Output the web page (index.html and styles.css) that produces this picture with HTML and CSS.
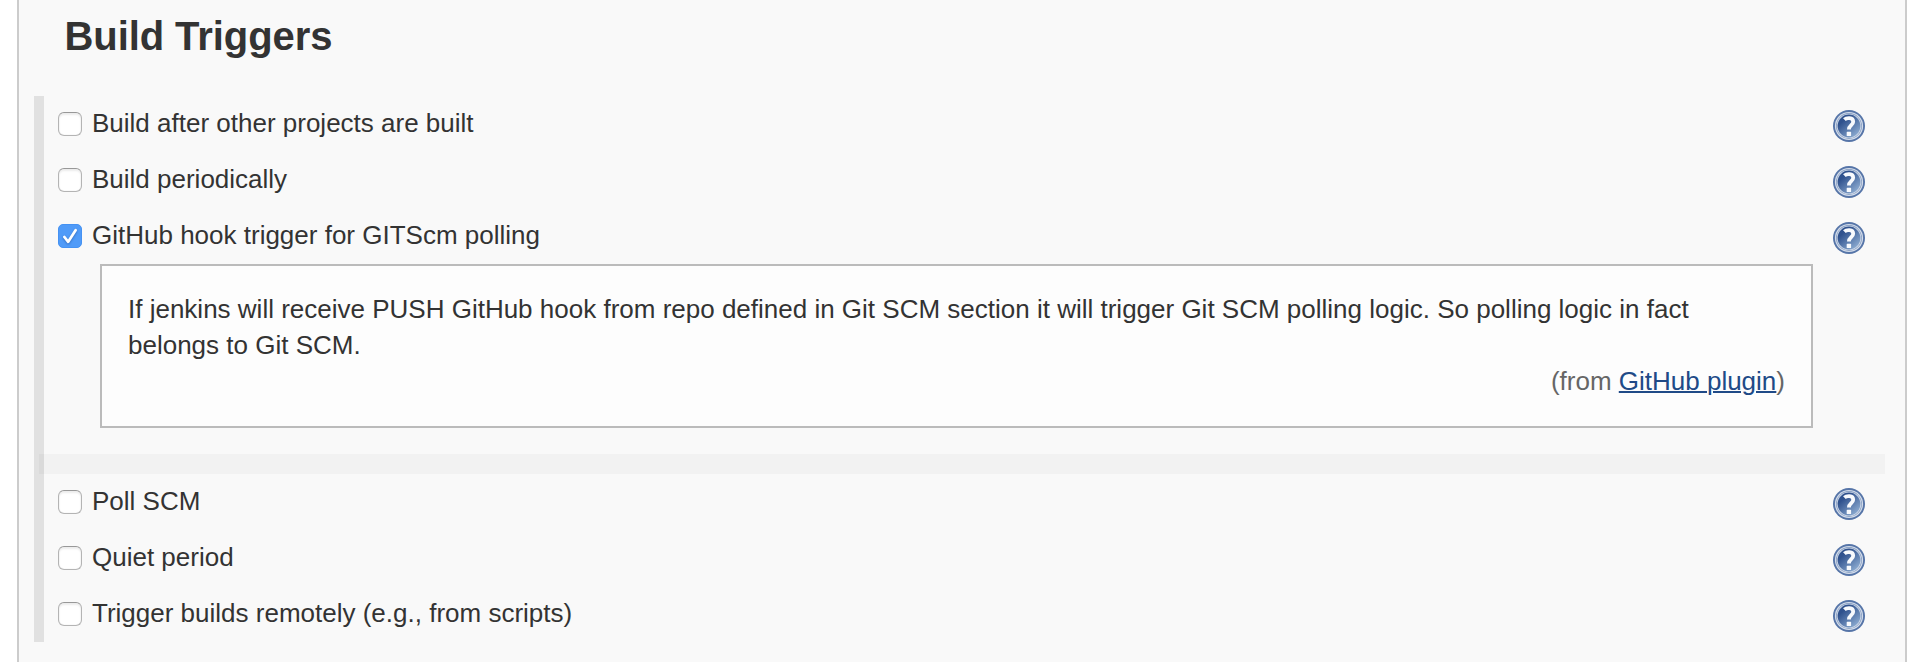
FILE: index.html
```
<!DOCTYPE html>
<html lang="en">
<head>
<meta charset="utf-8">
<title>Build Triggers</title>
<link rel="stylesheet" href="styles.css">
</head>
<body>
<svg class="defs" aria-hidden="true">
  <defs>
    <linearGradient id="disc" x1="0" y1="0.1" x2="0.8" y2="1">
      <stop offset="0.25" stop-color="#30528e"/>
      <stop offset="1" stop-color="#8faed3"/>
    </linearGradient>
    <symbol id="help" viewBox="0 0 32 32">
      <circle cx="16" cy="16" r="16" fill="#5675a8"/>
      <circle cx="16" cy="16" r="14.1" fill="#d3dcea"/>
      <circle cx="16" cy="16" r="12.9" fill="#7e97be"/>
      <circle cx="16" cy="16" r="12.3" fill="#cbd6e7"/>
      <circle cx="16" cy="16" r="11.4" fill="url(#disc)"/>
      <path d="M11.4 9.7C13.4 7.7 20.2 7 20.2 11.8C20.2 15.3 15.9 15.2 15.9 19.6" fill="none" stroke="#f8fafd" stroke-width="3.8"/>
      <rect x="13.7" y="21.8" width="4.4" height="4.2" rx="0.6" fill="#f8fafd"/>
    </symbol>
  </defs>
</svg>
<main class="panel">
  <h1 class="title">Build Triggers</h1>
  <div class="triggers">
    <div class="row">
      <label class="option"><input class="check" type="checkbox"><span>Build after other projects are built</span></label>
      <svg class="help"><use href="#help"/></svg>
    </div>
    <div class="row">
      <label class="option"><input class="check" type="checkbox"><span>Build periodically</span></label>
      <svg class="help"><use href="#help"/></svg>
    </div>
    <div class="row">
      <label class="option"><span class="check checked"><svg class="tick" viewBox="0 0 24 24"><path d="M6.4 13L10.2 17.8L17.6 6.2"/></svg></span><span>GitHub hook trigger for GITScm polling</span></label>
      <svg class="help"><use href="#help"/></svg>
    </div>
    <div class="help-box">
      <p class="help-text">If jenkins will receive PUSH GitHub hook from repo defined in Git SCM section it will trigger Git SCM polling logic. So polling logic in fact belongs to Git SCM.</p>
      <p class="from">(from <a class="link" href="#">GitHub plugin</a>)</p>
    </div>
    <div class="separator"></div>
    <div class="row">
      <label class="option"><input class="check" type="checkbox"><span>Poll SCM</span></label>
      <svg class="help"><use href="#help"/></svg>
    </div>
    <div class="row">
      <label class="option"><input class="check" type="checkbox"><span>Quiet period</span></label>
      <svg class="help"><use href="#help"/></svg>
    </div>
    <div class="row">
      <label class="option"><input class="check" type="checkbox"><span>Trigger builds remotely (e.g., from scripts)</span></label>
      <svg class="help"><use href="#help"/></svg>
    </div>
  </div>
</main>
</body>
</html>
```
FILE: styles.css
```
* {
  box-sizing: border-box;
}

body {
  margin: 0;
  background: #fff;
  color: #333;
  font: 26px/36px "Liberation Sans", Helvetica, Arial, sans-serif;
}

.defs {
  display: block;
  width: 0;
  height: 0;
}

.panel {
  height: 662px;
  margin: 0 5px 0 17px;
  padding: 0 20px 0 15px;
  border: solid #ccc;
  border-width: 0 2px;
  background: #f9f9f9;
  overflow: hidden;
}

.title {
  height: 96px;
  margin: 0;
  padding: 12px 0 0 30.5px;
  font-size: 40px;
  line-height: 48px;
  letter-spacing: -0.08px;
}

.triggers {
  border-left: 10px solid #e1e1e1;
}

.row {
  display: flex;
  justify-content: space-between;
  height: 56px;
  padding: 14px 20px 0 14px;
}

.option {
  display: flex;
  gap: 10px;
  line-height: 26px;
  white-space: nowrap;
}

.check {
  appearance: none;
  flex: none;
  width: 24px;
  height: 24px;
  margin: 2px 0 0;
  border: 1px solid #b4b4b4;
  border-top-color: #989898;
  border-radius: 6px;
  background: #fff;
  box-shadow: inset 0 2px 2px #ededed, inset 0 0 1px #ccc;
}

.checked {
  border: 1px solid #4592f3;
  border-radius: 5px;
  background: #509bf8;
  box-shadow: none;
}

.tick {
  display: block;
  width: 24px;
  height: 24px;
  margin: -1px;
  fill: none;
  stroke: #fff;
  stroke-width: 2.7;
  stroke-linecap: round;
  stroke-linejoin: round;
  filter: drop-shadow(0 1px 1px rgba(0, 40, 110, 0.4));
}

.help {
  flex: none;
  width: 32px;
  height: 32px;
}

.help-box {
  height: 164px;
  margin: 0 72px 26px 56px;
  padding: 25px 26px;
  border: 2px solid #bbb;
  background: #fdfdfd;
}

.help-text,
.from {
  margin: 0;
}

.from {
  color: #666;
  text-align: right;
}

.link {
  color: #204a87;
  text-decoration: underline;
  text-decoration-thickness: 2px;
}

.separator {
  height: 20px;
  margin-left: -5px;
  background: rgba(0, 0, 0, 0.027);
}
```
